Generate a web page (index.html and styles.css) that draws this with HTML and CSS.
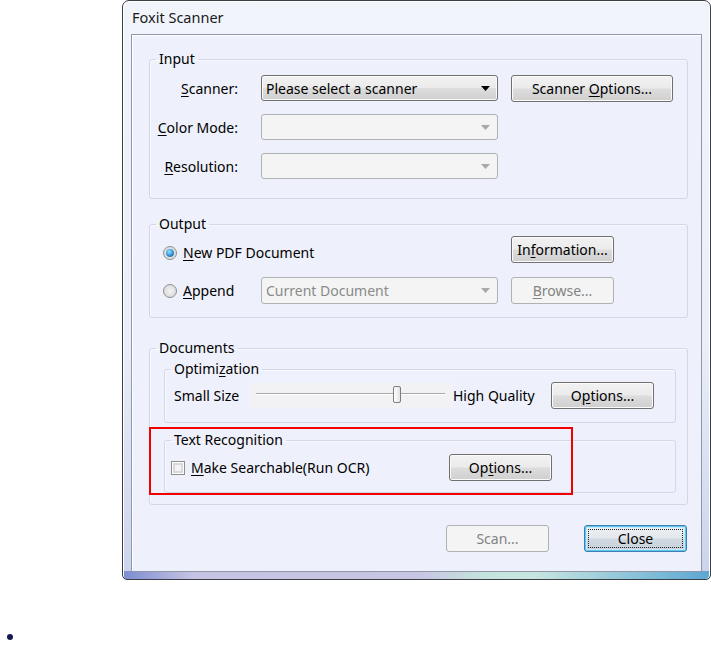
FILE: index.html
```html
<!DOCTYPE html>
<html>
<head>
<meta charset="utf-8">
<link rel="stylesheet" href="styles.css">
</head>
<body>
<div class="window">
  <div class="titlebar">Foxit Scanner</div>
  <div class="client">
    <fieldset class="group">
      <legend>Input</legend>
      <div class="input-grid">
        <div class="lbl"><u>S</u>canner:</div>
        <div class="combo"><span>Please select a scanner</span><svg class="arrow" width="9" height="5" viewBox="0 0 9 5"><path d="M0 0H9L4.5 5Z" fill="#000"/></svg></div>
        <div class="btn wide"><span>Scanner <u>O</u>ptions...</span></div>
        <div class="lbl"><u>C</u>olor Mode:</div>
        <div class="combo disabled"><span></span><svg class="arrow" width="9" height="5" viewBox="0 0 9 5"><path d="M0 0H9L4.5 5Z" fill="#a8a8a8"/></svg></div>
        <div></div>
        <div class="lbl"><u>R</u>esolution:</div>
        <div class="combo disabled"><span></span><svg class="arrow" width="9" height="5" viewBox="0 0 9 5"><path d="M0 0H9L4.5 5Z" fill="#a8a8a8"/></svg></div>
        <div></div>
      </div>
    </fieldset>

    <fieldset class="group output">
      <legend>Output</legend>
      <div class="output-grid">
        <label class="opt first"><span class="radio checked"></span><span><u>N</u>ew PDF Document</span></label>
        <div class="btn side"><span>In<u>f</u>ormation...</span></div>
        <label class="opt"><span class="radio"></span><span><u>A</u>ppend</span></label>
        <div class="combo disabled"><span>Current Document</span><svg class="arrow" width="9" height="5" viewBox="0 0 9 5"><path d="M0 0H9L4.5 5Z" fill="#a8a8a8"/></svg></div>
        <div class="btn disabled side"><span><u>B</u>rowse...</span></div>
      </div>
    </fieldset>

    <fieldset class="group documents">
      <legend>Documents</legend>
      <div class="doc-body">
        <fieldset class="group optim">
          <legend>Optimi<u>z</u>ation</legend>
          <div class="optim-grid">
            <span>Small Size</span>
            <div class="slider"><div class="track"></div><div class="thumb" style="left:143px"></div></div>
            <span>High Quality</span>
            <div class="btn"><span>O<u>p</u>tions...</span></div>
          </div>
        </fieldset>
        <fieldset class="group ocr">
          <legend>Text Recognition</legend>
          <div class="ocr-grid">
            <label class="opt"><span class="check"></span><span><u>M</u>ake Searchable(Run OCR)</span></label>
            <div class="btn"><span>Op<u>t</u>ions...</span></div>
          </div>
        </fieldset>
        <div class="highlight"></div>
      </div>
    </fieldset>

    <div class="actions">
      <div class="btn disabled"><span>Scan...</span></div>
      <div class="btn default"><span class="focus">Close</span></div>
    </div>
  </div>
</div>
<div class="bullet"></div>
</body>
</html>
```

FILE: styles.css
```css
* { box-sizing: border-box; }

body {
  margin: 0;
  background: #ffffff;
  font-family: "Noto Sans", "Open Sans", sans-serif;
  font-size: 14px;
  color: #000;
}

u { text-decoration: underline; text-underline-offset: 2px; }

.window {
  margin-left: 122px;
  width: 589px;
  height: 580px;
  border: 1px solid #3b3f45;
  border-radius: 7px 7px 5px 5px;
  padding: 0 8px 8px 8px;
  background:
    linear-gradient(90deg, #7b8dd0 0%, #c6c3e4 12%, #c8c4e3 50%, #c5e5dc 62%, #c8e6e0 70%, #5ca7d3 100%) bottom / 100% 8px no-repeat,
    linear-gradient(180deg, #f1f4fb 0%, #e9eef8 60%, #cbd3ec 100%);
  box-shadow: inset 1px 1px 0 #ffffff, inset -1px 0 0 #ffffff;
}

.titlebar {
  height: 33px;
  line-height: 33px;
  padding-left: 1px;
  font-size: 14.5px;
  color: #1a1a1a;
}

.client {
  height: 538px;
  border: 1px solid #8f98a6;
  background: #eef0fb;
  padding: 16px 13px 0 17px;
  box-shadow: inset 1px 1px 0 #ffffff;
}

.group {
  margin: 0;
  padding: 0;
  min-width: 0;
  border: 1px solid #d3d8e6;
  border-radius: 3px;
  box-shadow: inset 1px 1px 0 #f8f9fe;
}

.group legend {
  margin-left: 6px;
  padding: 0 3px;
  line-height: 16px;
  height: 16px;
}

/* Input */
.input-grid {
  display: grid;
  grid-template-columns: 88px 237px 162px;
  grid-auto-rows: 26px;
  column-gap: 23px;
  row-gap: 13px;
  padding: 8px 0 19px 0;
}
.input-grid .btn.wide {
  width: 162px;
  margin-left: -10px;
  justify-self: start;
}
.input-grid .lbl {
  text-align: right;
  align-self: center;
}

/* Output */
.output { margin-top: 17px; }
.output-grid {
  display: grid;
  grid-template-columns: 98px 237px 116px;
  grid-template-rows: 27px 27px;
  column-gap: 0;
  row-gap: 14px;
  padding: 4px 0 13px 13px;
}
.output-grid .first { grid-column: 1 / 3; align-self: end; margin-bottom: 1px; }
.output-grid .side { grid-column: 3; margin-left: 13px; }
.output-grid .combo { height: 27px; }

.opt {
  display: flex;
  align-items: center;
  gap: 6px;
  align-self: center;
}

/* Documents */
.documents {
  margin-top: 22px;
}
.doc-body {
  position: relative;
  padding: 5px 11px 11px 14px;
}
.optim-grid {
  display: grid;
  grid-template-columns: 76px 203px 98px 103px;
  grid-template-rows: 27px;
  align-items: center;
  padding: 5px 0 13px 9px;
}
.ocr { margin-top: 9px; }
.ocr-grid {
  display: grid;
  grid-template-columns: 278px 103px;
  grid-template-rows: 27px;
  align-items: center;
  padding: 6px 0 11px 6px;
}

.highlight {
  position: absolute;
  left: -1px;
  top: 71px;
  width: 424px;
  height: 68px;
  border: 2px solid #f20000;
}

/* Slider */
.slider {
  position: relative;
  height: 25px;
  background: #f2f2f5;
}
.track {
  position: absolute;
  left: 6px;
  right: 8px;
  top: 10px;
  height: 2px;
  border-top: 1px solid #a9a9ad;
  border-bottom: 1px solid #ffffff;
}
.thumb {
  position: absolute;
  top: 3px;
  width: 8px;
  height: 17px;
  border: 1px solid #7d7d7d;
  border-radius: 2px;
  background: linear-gradient(90deg, #ffffff, #e2e2e2);
}

/* Controls */
.btn {
  height: 27px;
  border: 1px solid #707070;
  border-radius: 3px;
  background: linear-gradient(180deg, #f2f2f2 0%, #ebebeb 48%, #dddddd 52%, #cfcfcf 100%);
  box-shadow: inset 0 0 0 1px #fbfbfb;
  display: flex;
  align-items: center;
  justify-content: center;
  color: #000;
}
.btn.disabled {
  border-color: #adb2b5;
  background: #f4f4f4;
  box-shadow: none;
  color: #838383;
}

.combo {
  height: 26px;
  border: 1px solid #707070;
  border-radius: 3px;
  background: linear-gradient(180deg, #f2f2f2 0%, #ebebeb 48%, #dddddd 52%, #cfcfcf 100%);
  box-shadow: inset 0 0 0 1px #fbfbfb;
  display: flex;
  align-items: center;
  justify-content: space-between;
  padding: 0 7px 0 4px;
}
.combo.disabled {
  border-color: #adb2b5;
  background: #f4f4f4;
  box-shadow: none;
  color: #8a8a8a;
}
.arrow { flex: none; }

.radio {
  width: 14px;
  height: 14px;
  border-radius: 50%;
  border: 1px solid #8e8f8f;
  background: radial-gradient(circle at 50% 50%, #f4f4f4 0%, #dcdcdc 70%, #cfcfcf 100%);
  display: inline-flex;
  align-items: center;
  justify-content: center;
  flex: none;
}
.radio.checked::after {
  content: "";
  width: 8px;
  height: 8px;
  border-radius: 50%;
  background: radial-gradient(circle at 40% 35%, #9ee0fb 0%, #3e9ede 45%, #0d4f8c 100%);
}

.check {
  width: 14px;
  height: 14px;
  border: 1px solid #8e8f8f;
  background: #f4f4f4;
  box-shadow: inset 0 0 0 1px #fdfdfd, inset 0 0 0 3px #d9d9d9;
  flex: none;
}

.actions {
  display: flex;
  justify-content: flex-end;
  gap: 35px;
  margin-top: 20px;
  padding-right: 1px;
}
.actions .btn { width: 103px; }
.btn.default {
  border-color: #3c7fb1;
  box-shadow: inset 0 0 0 1px #5fc4ef, inset 0 0 0 2px #c5eaf9;
  background: linear-gradient(180deg, #eef1f4 0%, #e3e8ed 48%, #d1dae2 52%, #c6d0da 100%);
  padding: 3px;
}
.focus {
  width: 100%;
  height: 100%;
  border: 1px dotted #222;
  display: flex;
  align-items: center;
  justify-content: center;
}

.bullet {
  margin: 54px 0 0 7px;
  width: 6px;
  height: 6px;
  border-radius: 50%;
  background: #141a50;
}
```
